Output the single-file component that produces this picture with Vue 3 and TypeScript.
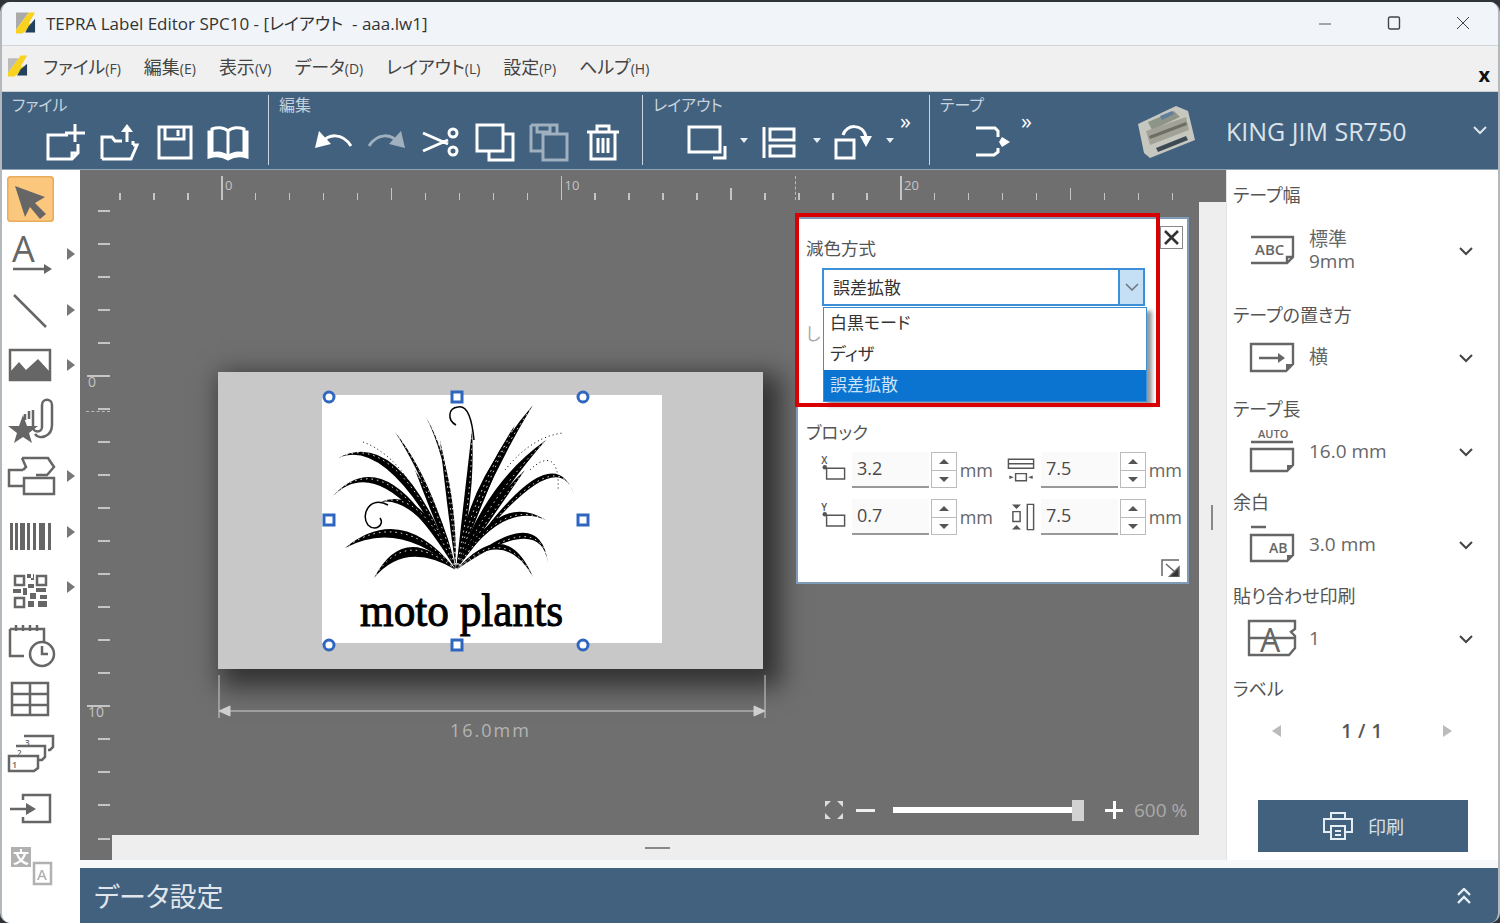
<script setup lang="ts">
import { h } from "vue";
import type { FunctionalComponent } from "vue";

interface IconDef {
  s?: string; // stroked outline
  f?: string; // solid parts
  t?: [number, number, number, string, string?][]; // x, y, size, text, colour
  dim?: boolean;
}

// renders a line icon, colour and weight come from the caller
const Ico: FunctionalComponent<{ def: IconDef; size: number; color: string; sw: number; vb?: number }> = (p) => {
  const vb = p.vb ?? p.size;
  const kids = [];
  if (p.def.f) kids.push(h("path", { d: p.def.f, fill: p.color, stroke: "none" }));
  if (p.def.s) kids.push(h("path", { d: p.def.s }));
  for (const [x, y, size, text, color] of p.def.t ?? []) {
    kids.push(h("text", { x, y, "font-size": size, fill: color ?? p.color, stroke: "none", "font-family": "Open Sans, Noto Sans CJK JP, sans-serif", "font-weight": size > 30 ? 400 : 600 }, text));
  }
  return h("svg", {
    width: p.size, height: p.size, viewBox: `0 0 ${vb} ${vb}`, fill: "none",
    stroke: p.color, "stroke-width": p.sw, opacity: p.def.dim ? 0.5 : 1, style: "flex-shrink:0;display:block;overflow:visible",
  }, kids);
};

const menus = [["ファイル", "(F)"], ["編集", "(E)"], ["表示", "(V)"], ["データ", "(D)"], ["レイアウト", "(L)"], ["設定", "(P)"], ["ヘルプ", "(H)"]];

const circle = (x: number, y: number, r: number) => `M${x - r} ${y}a${r} ${r} 0 1 1 ${r * 2} 0a${r} ${r} 0 1 1 ${-r * 2} 0`;

const fileIcons: IconDef[] = [
  { s: "M22 13H2V37H26L32 31V22M26 37V31H32M29 2V20M19 11H39" },
  { s: "M2 37V15H12L15 19H22M33 19V23M2 37H31L37 23H33M27 9V20", f: "M27 2L33 10H21Z" },
  { s: "M5 5H37V36H5ZM11 5V17H30V5M24 8V14" },
  { s: "M20 9C16 5 9 5 4 7V32C9 30 16 31 20 35C24 31 31 30 36 32V7C31 5 24 5 20 9ZM20 9V35M4 10H1V35C8 33 15 34 20 37C25 34 32 33 39 35V10H36" },
];
const editIcons: IconDef[] = [
  { s: "M9 21C15 12 29 10 38 24", f: "M2 26L6 9L18 22Z" },
  { s: "M31 21C25 12 11 10 2 24", f: "M38 26L34 9L22 22Z", dim: true },
  { s: `M2 11L27 22M2 29L27 18${circle(32, 11, 4)}${circle(32, 29, 4)}` },
  { s: "M2 3H28V29H2ZM28 12H38V38H14V29" },
  { s: "M2 3H28V12M2 3V29H14M8 3V10H21V3M14 12H38V38H14Z", dim: true },
  { s: "M4 10H36M14 10V4H26V10M8 10V37H32V10M15 16V31M20 16V31M25 16V31" },
];
const tapeIcon: IconDef = { s: "M3 6H22L25 9V15M25 26V30L21 33H3", f: "M29 15L37 20L29 25L26 20Z" };
const layoutIcons: IconDef[] = [
  { s: "M2 5H33V30H2ZM38 24V36H26" },
  { s: "M4 5V36M10 7H34V18H10ZM10 24H34V34H10Z" },
  { s: "M3 18H21V36H3ZM10 13C13 2 30 1 33 15", f: "M27 14H39L33 25Z" },
];

// tools on the left, in order from the top
const bars = [4, 9, 14, 21, 27, 33, 36, 42];
const tools: { icon: IconDef; more: boolean; active?: boolean }[] = [
  { icon: { f: "M8 10L38 21L28 27L39 38L33 43L23 31L18 41Z" }, more: false, active: true },
  { icon: { s: "M7 39H40", f: "M38 34L46 39L38 44Z", t: [[6, 32, 36, "A"]] }, more: true },
  { icon: { s: "M8 9L40 41" }, more: true },
  { icon: { s: "M4 9H44V39H4Z", f: "M4 39V31L13 21L20 29L32 18L44 31V39Z" }, more: true },
  { icon: { s: "M27 13V30C27 36 36 36 36 30V8C36 1 46 1 46 8V28C46 40 33 43 29 37M23 14V22M19 17V23", f: "M17 18L21 29L32 29L23 36L26 46L17 40L8 46L11 36L2 29L13 29Z" }, more: false },
  { icon: { s: "M16 6H42L48 15L41 23H30M16 6L20 15L17 18M17 18H3V34H18M18 26H48V42H18Z" }, more: true },
  { icon: { f: bars.map((x, i) => `M${x} 15h${i % 3 === 2 ? 5 : 3}v27h-${i % 3 === 2 ? 5 : 3}z`).join("") }, more: true },
  { icon: { s: "M9 13h9v9h-9zM31 13h9v9h-9zM9 35h9v9h-9z", f: "M21 11h4v6h3v-6h-1v4h-6zM22 21h6v4h-6zM7 26h8v4h-8zM17 25h4v7h-4zM30 25h10v4h-10zM24 30h6v6h-6zM34 32h7v4h-7zM22 38h6v6h-6zM32 38h9v6h-9z" }, more: true },
  { icon: { s: `M4 10H38V23M4 10V37H18M10 6V12M17 6V12M24 6V12M31 6V12${circle(36, 35, 12)}M36 27V35H42` }, more: false },
  { icon: { s: "M6 9H42V41H6ZM6 20H42M6 31H42M24 9V41" }, more: false },
  { icon: { s: "M18 6H47V17L44 20H42M10 16H39V27L36 30H33M3 26H32V38L28 41H3Z", t: [[19, 16, 8, "3"], [11, 26, 8, "2"], [6, 38, 9, "1"]] }, more: false },
  { icon: { s: "M17 15V10H44V37H17V32M4 24H22", f: "M20 18L30 24L20 30Z" }, more: false },
  { icon: { s: "M28 22H45V43H28Z", f: "M5 6H25V26H5Z", t: [[7, 22, 16, "文", "#fff"], [31, 39, 15, "A"]], dim: true }, more: false },
];

interface PropRow {
  label: string;
  icon: IconDef;
  lines: string[];
}
const propRows: PropRow[] = [
  { label: "テープ幅", icon: { s: "M3 11H45V31L39 37H3M45 31H39V37", t: [[7, 29, 15, "ABC"]] }, lines: ["標準", "9mm"] },
  { label: "テープの置き方", icon: { s: "M3 11H45V31L38 38H3ZM11 25H31", f: "M30 20L37 25L30 30ZM45 31L38 38V31Z" }, lines: ["横"] },
  { label: "テープ長", icon: { s: "M3 15H45M3 22H45V38L39 44H3Z", f: "M45 38L39 44V38Z", t: [[10, 11, 11, "AUTO"]] }, lines: ["16.0 mm"] },
  { label: "余白", icon: { s: "M3 7H18M3 15H45V35L39 41H3Z", f: "M45 35L39 41V35Z", t: [[21, 33, 14, "AB"]] }, lines: ["3.0 mm"] },
  { label: "貼り合わせ印刷", icon: { s: "M1 7H47V15L43 18L47 22V34L41 41H1ZM1 24H47", t: [[12, 38, 32, "A"]] }, lines: ["1"] },
];

// spin boxes in the floating block panel
const spinRows: { icon: IconDef; value: string }[] = [
  { icon: { s: "M14 18H34V30H14Z", f: `${circle(12, 17, 2.5)}`, t: [[8, 13, 11, "X"]] }, value: "3.2" },
  { icon: { s: "M6 8H34V18H6ZM6 13H34M14 24H26V32H14Z", f: "M7 26L12 28L7 30ZM33 26L28 28L33 30Z" }, value: "7.5" },
  { icon: { s: "M14 18H34V30H14Z", f: `${circle(12, 17, 2.5)}`, t: [[8, 13, 11, "Y"]] }, value: "0.7" },
  { icon: { s: "M27 6H34V34H27ZM11 14H19V25H11Z", f: "M10 6L15 11L20 6ZM10 34L15 29L20 34Z" }, value: "7.5" },
];

// ruler ticks, positions are relative to the canvas
const hTicks = Array.from({ length: 32 }, (_, i) => {
  const n = i - 3;
  const major = n % 10 === 0;
  const mid = !major && n % 5 === 0;
  return { x: 141 + n * 33.95, major, mid, label: major ? String(n) : "" };
});
const vTicks = Array.from({ length: 19 }, (_, i) => {
  const n = i - 5;
  const major = n % 10 === 0;
  const mid = !major && n % 5 === 0;
  return { y: 205 + n * 33, major, mid, label: major && n >= 0 ? String(n) : "" };
});

// the plant, drawn as filled blades in page coordinates
const base = [456, 570];
const blades: [number, number, number, number, number][] = [
  [533, 405, 478, 480, 8], [546, 440, 490, 490, 9], [515, 425, 480, 490, 7],
  [505, 445, 470, 500, 6], [525, 470, 490, 510, 6],
  [575, 497, 555, 430, 5], [548, 563, 540, 505, 6], [533, 577, 505, 520, 6],
  [546, 520, 500, 495, 6], [338, 458, 395, 430, 8], [332, 497, 385, 440, 7],
  [380, 502, 420, 490, 7], [345, 548, 400, 510, 9], [374, 578, 405, 530, 10],
  [395, 432, 430, 480, 3], [426, 417, 455, 470, 2], [472, 430, 470, 500, 6],
  [440, 440, 450, 500, 4], [415, 470, 440, 520, 6],
];
const bladePaths = blades.map(([tx, ty, cx, cy, w]) => {
  const [bx, by] = base;
  const len = Math.hypot(tx - bx, ty - by);
  const nx = (-(ty - by) / len) * w;
  const ny = ((tx - bx) / len) * w;
  return {
    fill: `M${bx} ${by}Q${cx + nx} ${cy + ny} ${tx} ${ty}Q${cx - nx} ${cy - ny} ${bx} ${by}Z`,
    hatch: `M${bx} ${by}Q${cx + nx / 3} ${cy + ny / 3} ${tx} ${ty}`,
  };
});

const handles = [[329, 397, 0], [457, 397, 1], [583, 397, 0], [329, 520, 1], [583, 520, 1], [329, 645, 0], [457, 645, 1], [583, 645, 0]];
</script>

<template>
  <div class="window">
    <header class="titlebar">
      <svg class="logo" width="20" height="23" viewBox="0 0 22 24">
        <path d="M0 1H14L0 20Z" fill="#aaa" />
        <path d="M14 1H21L14 13H21L7 24H0V20Z" fill="#f7d21e" />
        <path d="M21 8V23H10L14 16Z" fill="#23405f" />
      </svg>
      <span class="app-title">TEPRA Label Editor SPC10 - [レイアウト&nbsp; - aaa.lw1]</span>
      <div class="win-btns">
        <svg width="14" height="14" viewBox="0 0 14 14" stroke="#555" fill="none"><path d="M1 8H13" /></svg>
        <svg width="14" height="14" viewBox="0 0 14 14" stroke="#444" fill="none" stroke-width="1.4"><rect x="1.5" y="1" width="11" height="12" rx="1.5" /></svg>
        <svg width="14" height="14" viewBox="0 0 14 14" stroke="#444" fill="none"><path d="M1 1L13 13M13 1L1 13" /></svg>
      </div>
    </header>

    <nav class="menubar">
      <svg class="menu-logo" width="20" height="23" viewBox="0 0 22 24">
        <path d="M0 4H12L0 20Z" fill="#bbb" />
        <path d="M14 1H21L14 13H21L7 24H0V20Z" fill="#f7d21e" />
        <path d="M21 10V23H10L14 16Z" fill="#23405f" />
      </svg>
      <span v-for="m in menus" :key="m[0]" class="menu-item">{{ m[0] }}<small>{{ m[1] }}</small></span>
      <span class="menu-close">x</span>
    </nav>

    <div class="toolbar">
      <section class="tb-group tb-file">
        <div class="tb-label">ファイル</div>
        <div class="tb-icons gap14">
          <Ico v-for="(ic, i) in fileIcons" :key="i" :def="ic" :size="40" color="#fff" :sw="3" />
        </div>
      </section>
      <section class="tb-group tb-edit">
        <div class="tb-label">編集</div>
        <div class="tb-icons gap14">
          <Ico v-for="(ic, i) in editIcons" :key="i" :def="ic" :size="40" color="#fff" :sw="3" />
        </div>
      </section>
      <section class="tb-group tb-layout">
        <div class="tb-label">レイアウト</div>
        <div class="tb-icons">
          <template v-for="(ic, i) in layoutIcons" :key="i">
            <Ico :def="ic" :size="40" color="#fff" :sw="3" />
            <span class="drop"></span>
          </template>
          <span class="more">»</span>
        </div>
      </section>
      <section class="tb-group tb-tape">
        <div class="tb-label">テープ</div>
        <div class="tb-icons">
          <Ico :def="tapeIcon" :size="40" color="#fff" :sw="3" />
          <span class="more more-tape">»</span>
        </div>
      </section>
      <svg class="printer" width="60" height="56" viewBox="0 0 60 56">
        <path d="M2 21L40 3L52 8L59 37L14 55L8 50Z" fill="#c6c8c0" />
        <path d="M12 19L38 8L44 14L16 27Z" fill="#8f9488" />
        <path d="M24 13L36 8L38 11L26 17Z" fill="#5f7f9c" />
        <path d="M10 28L50 14L53 27L14 42Z" fill="#a2a396" />
        <path d="M13 33L50 19L51 22L14 36Z" fill="#6d6e64" />
        <path d="M20 45L50 33L52 37L22 49Z" fill="#3d4a54" />
      </svg>
      <span class="printer-name">KING JIM SR750</span>
      <svg class="printer-chev" width="14" height="9" viewBox="0 0 14 9" fill="none" stroke="#dde5ec" stroke-width="2"><path d="M1 1L7 7L13 1" /></svg>
    </div>

    <div class="body">
      <aside class="tools">
        <div v-for="(tool, i) in tools" :key="i" class="tool">
          <span class="tool-box" :class="{ active: tool.active }">
            <Ico :def="tool.icon" :size="48" color="#666" :sw="2.5" />
          </span>
          <span v-if="tool.more" class="tool-more"></span>
        </div>
      </aside>

      <div class="main">
        <div class="work">
          <div class="center">
            <div class="editor">
              <div class="canvas">
                <template v-for="t in hTicks" :key="t.x">
                  <div class="htick" :class="{ major: t.major, mid: t.mid }" :style="{ left: t.x + 'px' }"></div>
                  <span v-if="t.label" class="hlabel" :style="{ left: t.x + 4 + 'px' }">{{ t.label }}</span>
                </template>
                <div class="hmark"></div>
                <template v-for="t in vTicks" :key="t.y">
                  <div class="vtick" :class="{ major: t.major, mid: t.mid }" :style="{ top: t.y + 'px' }"></div>
                  <span v-if="t.label" class="vlabel" :style="{ top: t.y + 'px' }">{{ t.label }}</span>
                </template>
                <div class="vmark"></div>

                <div class="sheet">
                  <div class="sheet-image"></div>
                  <svg class="art" width="545" height="297" viewBox="218 372 545 297">
                    <g v-for="(b, i) in bladePaths" :key="i">
                      <path :d="b.fill" fill="#000" />
                      <path :d="b.hatch" fill="none" stroke="#fff" stroke-width="1" stroke-dasharray="1.5 4" />
                    </g>
                    <path d="M474 440C472 420 468 405 458 407C448 408 447 420 456 425" fill="none" stroke="#000" stroke-width="1.5" />
                    <path d="M388 505C370 495 360 515 368 525C375 532 385 525 380 518" fill="none" stroke="#000" stroke-width="1.5" />
                    <path d="M530 470C545 455 560 455 558 490M505 470C525 445 545 435 563 433M363 442C385 450 405 470 420 500" fill="none" stroke="#000" stroke-width="1" stroke-dasharray="1 3" />
                    <text x="360" y="626" textLength="203" lengthAdjust="spacingAndGlyphs" class="art-text">moto plants</text>
                    <template v-for="(p, i) in handles" :key="i">
                      <rect v-if="p[2]" :x="p[0] - 5" :y="p[1] - 5" width="10" height="10" fill="#fff" stroke="#2f67c0" stroke-width="3" />
                      <circle v-else :cx="p[0]" :cy="p[1]" r="5" fill="#fff" stroke="#2f67c0" stroke-width="3" />
                    </template>
                  </svg>
                </div>

                <svg class="dimension" width="552" height="48" viewBox="0 0 552 48" fill="none" stroke="#cfcfcf">
                  <path d="M1 0V43M547 0V43M3 36H545" />
                  <path d="M1 36L12 31V41ZM547 36L536 31V41Z" fill="#cfcfcf" />
                </svg>
                <span class="dim-text">16.0mm</span>

                <div class="zoom-bar">
                  <svg width="20" height="20" viewBox="0 0 20 20" fill="#ddd"><path d="M1 1H7L1 7ZM19 1H13L19 7ZM1 19H7L1 13ZM19 19H13L19 13Z" /></svg>
                  <span class="zoom-minus"></span>
                  <span class="zoom-track"><span class="zoom-thumb"></span></span>
                  <span class="zoom-plus"></span>
                  <span class="zoom-value">600 %</span>
                </div>

                <div class="panel">
                  <button type="button" class="panel-close">
                    <svg width="15" height="15" viewBox="0 0 15 15" stroke="#333" stroke-width="2.6" fill="none"><path d="M1 1L14 14M14 1L1 14" /></svg>
                  </button>
                  <div class="panel-title">減色方式</div>
                  <div class="select">
                    <span class="select-value">誤差拡散</span>
                    <span class="select-btn">
                      <svg width="14" height="8" viewBox="0 0 14 8" fill="none" stroke="#6b7580" stroke-width="1.5"><path d="M1 1L7 7L13 1" /></svg>
                    </span>
                    <ul class="select-list">
                      <li>白黒モード</li>
                      <li>ディザ</li>
                      <li class="selected">誤差拡散</li>
                    </ul>
                  </div>
                  <span class="behind">し</span>
                  <div class="panel-title block-title">ブロック</div>
                  <div class="spin-grid">
                    <div v-for="(row, i) in spinRows" :key="i" class="spin-item">
                      <Ico :def="row.icon" :size="36" :vb="40" color="#555" :sw="1.6" />
                      <span class="spin-input">{{ row.value }}</span>
                      <span class="spin-btns"><i class="up"></i><i class="down"></i></span>
                      <span class="spin-unit">mm</span>
                    </div>
                  </div>
                  <svg class="panel-grip" width="19" height="18" viewBox="0 0 19 18" fill="none" stroke="#666" stroke-width="1.5">
                    <path d="M1 17V1H18" />
                    <path d="M5 5L14 13M18 18V8L8 18Z" fill="#333" />
                  </svg>
                </div>
                <div class="callout"></div>
              </div>
              <div class="vscroll"><span class="grip-v"></span></div>
            </div>
            <div class="hscroll"><span class="grip-h"></span></div>
          </div>

          <aside class="props">
            <div v-for="(row, i) in propRows" :key="row.label" class="prop-group" :class="{ first: i === 0 }">
              <div class="prop-label">{{ row.label }}</div>
              <div class="prop-row">
                <Ico :def="row.icon" :size="48" color="#666" :sw="2.4" />
                <div class="prop-text">
                  <div v-for="l in row.lines" :key="l">{{ l }}</div>
                </div>
                <svg class="chev" width="14" height="9" viewBox="0 0 14 9" fill="none" stroke="#444" stroke-width="2"><path d="M1 1L7 7L13 1" /></svg>
              </div>
            </div>
            <div class="prop-label">ラベル</div>
            <div class="pager">
              <span class="tri-left"></span>
              <span>1 / 1</span>
              <span class="tri-right"></span>
            </div>
            <button type="button" class="print-btn">
              <svg width="32" height="30" viewBox="0 0 32 30" fill="none" stroke="#e6edf3" stroke-width="2"><path d="M9 8V2H23V8M9 21H2V8H30V21H23M9 15H23V28H9ZM13 20H19M13 24H19" /></svg>
              <span>印刷</span>
            </button>
          </aside>
        </div>
        <div class="strip"></div>
        <div class="databar">
          <span class="databar-title">データ設定</span>
          <svg width="14" height="16" viewBox="0 0 14 16" fill="none" stroke="#e6edf3" stroke-width="2.4"><path d="M1 7L7 1L13 7M1 15L7 9L13 15" /></svg>
        </div>
      </div>
    </div>
  </div>
</template>

<style>
html,
body {
  margin: 0;
  background: #2f3439;
  overflow: hidden;
}
</style>

<style scoped>
.window {
  box-sizing: border-box;
  width: 1500px;
  height: 921px;
  margin-top: 2px;
  display: flex;
  flex-direction: column;
  overflow: hidden;
  border-radius: 10px;
  border-left: 2px solid #b3b8bd;
  border-right: 2px solid #b3b8bd;
  background: #f0f0f0;
  color: #4a4a4a;
  font-family: "Open Sans", "Noto Sans CJK JP", sans-serif;
  font-feature-settings: "palt";
}

.titlebar {
  height: 44px;
  flex-shrink: 0;
  display: flex;
  align-items: center;
  padding-bottom: 2px;
  background: #f1f5fa;
  border-bottom: 1px solid #d3d6d9;
  box-sizing: border-box;
}

.logo {
  margin-left: 14px;
}

.app-title {
  margin-left: 10px;
  font-size: 17px;
  color: #333;
}

.win-btns {
  margin-left: auto;
  margin-right: 28px;
  display: flex;
  gap: 55px;
}

.menubar {
  position: relative;
  height: 46px;
  flex-shrink: 0;
  display: flex;
  align-items: center;
  gap: 23px;
  box-sizing: border-box;
  padding-bottom: 6px;
  background: #f0f0f0;
  border-bottom: 1px solid #c8ced4;
}

.menu-logo {
  margin-left: 6px;
  margin-right: -8px;
}

.menu-item {
  font-size: 18px;
  color: #444;
}

.menu-item small {
  font-size: 14px;
}

.menu-close {
  position: absolute;
  right: 8px;
  top: 15px;
  font-size: 20px;
  font-weight: 700;
  color: #111;
}

.toolbar {
  height: 78px;
  flex-shrink: 0;
  display: flex;
  align-items: center;
  box-sizing: border-box;
  background: #41617f;
  border-bottom: 1px solid #8fa3b5;
}

.tb-group {
  align-self: stretch;
  box-sizing: border-box;
  margin: 3px 0 4px;
  border-right: 1px solid #c9d4de;
}

.tb-label {
  height: 22px;
  line-height: 21px;
  font-size: 16px;
  padding-left: 10px;
  color: #c6d2dd;
}

.tb-icons {
  display: flex;
  align-items: flex-start;
  margin-top: 5px;
}

.gap14 {
  gap: 14px;
}

.tb-file {
  width: 267px;
}

.tb-file .tb-icons {
  padding-left: 44px;
}

.tb-edit {
  width: 374px;
}

.tb-edit .tb-icons {
  padding-left: 44px;
}

.tb-layout {
  width: 287px;
}

.tb-layout .tb-icons {
  padding-left: 44px;
}

.tb-tape {
  width: 206px;
  border-right: none;
}

.tb-tape .tb-icons {
  padding-left: 43px;
}

.drop {
  width: 33px;
  height: 34px;
  flex-shrink: 0;
  position: relative;
}

.drop::after {
  content: "";
  position: absolute;
  left: 13px;
  top: 16px;
  border-left: 4px solid transparent;
  border-right: 4px solid transparent;
  border-top: 5px solid #e6edf3;
}

.more {
  margin-left: -6px;
  margin-top: -14px;
  font-size: 22px;
  line-height: 24px;
  color: #fff;
}

.more-tape {
  margin-left: 8px;
}

.printer {
  flex-shrink: 0;
  filter: blur(0.6px);
}

.printer-name {
  margin-left: 30px;
  font-size: 25px;
  color: #dbe3ea;
}

.printer-chev {
  margin-left: auto;
  margin-right: 11px;
}

.body {
  flex: 1;
  min-height: 0;
  display: flex;
}

.tools {
  width: 78px;
  flex-shrink: 0;
  padding-top: 1px;
  background: #fff;
}

.tool {
  height: 55.5px;
  display: flex;
  align-items: center;
  padding-left: 4px;
}

.tool-box {
  width: 48px;
  height: 48px;
  display: block;
  box-sizing: border-box;
  border-radius: 4px;
}

.tool-box.active {
  width: 47px;
  height: 46px;
  margin-left: 1px;
  background: #fbc77d;
  box-shadow: inset 0 0 0 1.5px #e9ab5c;
}

.tool-more {
  margin-left: 13px;
  border-top: 6px solid transparent;
  border-bottom: 6px solid transparent;
  border-left: 8px solid #777;
}

.main {
  flex: 1;
  min-width: 0;
  display: flex;
  flex-direction: column;
}

.work {
  height: 690px;
  flex-shrink: 0;
  display: flex;
}

.center {
  width: 1146px;
  flex-shrink: 0;
  display: flex;
  flex-direction: column;
  background: #eee;
}

.editor {
  height: 665px;
  flex-shrink: 0;
  display: flex;
}

.canvas {
  position: relative;
  width: 1119px;
  flex-shrink: 0;
  overflow: hidden;
  background: #6f6f6f;
}

.htick {
  position: absolute;
  top: 23px;
  width: 1.5px;
  height: 7px;
  background: #c4c4c4;
}

.htick.mid {
  top: 18px;
  height: 12px;
}

.htick.major {
  top: 6px;
  height: 24px;
}

.hlabel {
  position: absolute;
  top: 6px;
  font-size: 13px;
  line-height: 18px;
  color: #c4c4c4;
}

.hmark {
  position: absolute;
  left: 715px;
  top: 6px;
  height: 24px;
  border-left: 1px dashed #bbb;
}

.vtick {
  position: absolute;
  left: 18px;
  width: 12px;
  height: 1.5px;
  background: #c4c4c4;
}

.vtick.major {
  left: 7px;
  width: 23px;
}

.vlabel {
  position: absolute;
  left: 8px;
  font-size: 14px;
  line-height: 13px;
  color: #c4c4c4;
}

.vmark {
  position: absolute;
  left: 6px;
  top: 241px;
  width: 24px;
  border-top: 1px dashed #bbb;
}

.sheet {
  position: absolute;
  left: 138px;
  top: 202px;
  width: 545px;
  height: 297px;
  background: #c8c8c8;
  box-shadow: 10px 10px 24px 8px rgba(0, 0, 0, 0.55);
}

.sheet-image {
  position: absolute;
  left: 104px;
  top: 23px;
  width: 340px;
  height: 248px;
  background: #fff;
}

.art {
  position: absolute;
  left: 0;
  top: 0;
  overflow: visible;
}

.art-text {
  font-family: "Liberation Serif", serif;
  font-size: 46px;
  fill: #000;
  stroke: #000;
  stroke-width: 1;
}

.dimension {
  position: absolute;
  left: 138px;
  top: 505px;
}

.dim-text {
  position: absolute;
  left: 370px;
  top: 548px;
  font-size: 18px;
  letter-spacing: 2px;
  color: #b4b4b4;
}

.zoom-bar {
  position: absolute;
  left: 744px;
  top: 627px;
  display: flex;
  align-items: center;
}

.zoom-minus {
  width: 19px;
  height: 3px;
  margin-left: 12px;
  background: #eee;
}

.zoom-track {
  position: relative;
  width: 186px;
  height: 6px;
  margin-left: 18px;
  background: #fff;
}

.zoom-thumb {
  position: absolute;
  right: -5px;
  top: -7px;
  width: 12px;
  height: 21px;
  background: #d2d2d2;
}

.zoom-plus {
  position: relative;
  width: 18px;
  height: 3px;
  margin-left: 26px;
  background: #fff;
}

.zoom-plus::after {
  content: "";
  position: absolute;
  left: 8px;
  top: -8px;
  width: 3px;
  height: 18px;
  background: #fff;
}

.zoom-value {
  margin-left: 11px;
  font-size: 19px;
  color: #aaa;
}

.panel {
  position: absolute;
  left: 716px;
  top: 47px;
  width: 393px;
  height: 367px;
  box-sizing: border-box;
  display: flex;
  flex-direction: column;
  padding: 18px 8px 5px;
  background: #fff;
  border: 2px solid #7f9bb8;
}

.panel-close {
  position: absolute;
  top: 7px;
  right: 4px;
  width: 23px;
  height: 23px;
  padding: 0;
  display: flex;
  align-items: center;
  justify-content: center;
  background: #fff;
  border: 1px solid #888;
}

.panel-title {
  height: 22px;
  line-height: 22px;
  font-size: 17.5px;
  color: #555;
}

.select {
  position: relative;
  width: 323px;
  height: 38px;
  box-sizing: border-box;
  margin: 9px 0 0 16px;
  display: flex;
  align-items: center;
  border: 2px solid #3d8fd8;
}

.select-value {
  flex: 1;
  padding: 0 0 2px 9px;
  font-size: 17px;
  color: #333;
}

.select-btn {
  width: 23px;
  align-self: stretch;
  display: flex;
  align-items: center;
  justify-content: center;
  background: #c5dff5;
  border-left: 2px solid #3d8fd8;
}

.select-list {
  position: absolute;
  left: -1px;
  top: 37px;
  z-index: 2;
  width: 324px;
  margin: 0;
  padding: 0;
  list-style: none;
  box-sizing: border-box;
  background: #fff;
  border: 1px solid #3d8fd8;
  box-shadow: 5px 4px 4px rgba(0, 0, 0, 0.4);
}

.select-list li {
  height: 31px;
  line-height: 29px;
  padding-left: 6px;
  font-size: 17px;
  color: #333;
}

.select-list .selected {
  background: #0a74d0;
  color: #cfe4f8;
}

.behind {
  position: absolute;
  left: 8px;
  top: 101px;
  font-size: 17px;
  color: #aaa;
}

.block-title {
  margin-top: 115px;
}

.spin-grid {
  margin: 9px 0 0 8px;
  display: grid;
  grid-template-columns: 179px 179px;
  column-gap: 10px;
  row-gap: 11px;
}

.spin-item {
  display: flex;
  align-items: center;
  height: 36px;
}

.spin-input {
  width: 78px;
  height: 36px;
  margin-left: 2px;
  padding-left: 5px;
  box-sizing: border-box;
  line-height: 32px;
  font-size: 18px;
  background: #fafafa;
  border-bottom: 2px solid #999;
}

.spin-btns {
  width: 26px;
  height: 36px;
  margin-left: 2px;
  box-sizing: border-box;
  display: flex;
  flex-direction: column;
  border: 1px solid #bbb;
}

.spin-btns i {
  flex: 1;
  position: relative;
}

.spin-btns i + i {
  border-top: 1px solid #bbb;
}

.spin-btns i::after {
  content: "";
  position: absolute;
  left: 7px;
  top: 6px;
  border-left: 5px solid transparent;
  border-right: 5px solid transparent;
}

.spin-btns .up::after {
  border-bottom: 5px solid #555;
}

.spin-btns .down::after {
  border-top: 5px solid #555;
}

.spin-unit {
  margin-left: 3px;
  font-size: 18px;
  color: #666;
}

.panel-grip {
  margin-top: auto;
  align-self: flex-end;
  margin-right: -1px;
}

.callout {
  position: absolute;
  left: 715px;
  top: 43px;
  width: 365px;
  height: 194px;
  box-sizing: border-box;
  border: 4px solid #d80000;
  z-index: 3;
}

.vscroll {
  position: relative;
  flex: 1;
  background: linear-gradient(#6f6f6f 32px, #eee 32px);
}

.grip-v {
  position: absolute;
  left: 12px;
  top: 335px;
  width: 2px;
  height: 25px;
  background: #888;
}

.hscroll {
  position: relative;
  flex: 1;
  background: linear-gradient(90deg, #6f6f6f 32px, #eee 32px);
}

.hscroll::before {
  content: "";
  position: absolute;
  left: 18px;
  top: 3px;
  width: 12px;
  height: 1.5px;
  background: #c4c4c4;
}

.grip-h {
  position: absolute;
  left: 565px;
  top: 12px;
  width: 25px;
  height: 2px;
  background: #888;
}

.props {
  flex: 1;
  min-width: 0;
  display: flex;
  flex-direction: column;
  box-sizing: border-box;
  padding: 12px 0 8px 6px;
  background: #fff;
  border-left: 1px solid #e3e3e3;
}

.prop-group {
  flex-shrink: 0;
}

.prop-label {
  height: 26px;
  line-height: 26px;
  font-size: 18px;
  color: #555;
}

.prop-row {
  height: 58px;
  margin-bottom: 9.5px;
  display: flex;
  align-items: center;
  padding-left: 15px;
}

.first .prop-row {
  height: 84px;
  margin-bottom: 10px;
}

.prop-text {
  margin-left: 13px;
  font-size: 19px;
  line-height: 22px;
  color: #666;
}

.chev {
  margin-left: auto;
  margin-right: 25px;
  margin-top: 3px;
}

.pager {
  width: 180px;
  margin: 16px 0 0 39px;
  display: flex;
  align-items: center;
  justify-content: space-between;
  font-size: 19px;
  font-weight: 600;
  letter-spacing: 0.5px;
  color: #555;
}

.tri-left {
  border-top: 6px solid transparent;
  border-bottom: 6px solid transparent;
  border-right: 9px solid #bbb;
}

.tri-right {
  border-top: 6px solid transparent;
  border-bottom: 6px solid transparent;
  border-left: 9px solid #bbb;
}

.print-btn {
  width: 210px;
  height: 52px;
  margin: auto 0 0 25px;
  display: flex;
  align-items: center;
  justify-content: center;
  gap: 14px;
  font-family: inherit;
  font-size: 18px;
  color: #d7e0e8;
  background: #41617f;
  border: none;
}

.strip {
  height: 8px;
  flex-shrink: 0;
  background: #f7f8f9;
}

.databar {
  flex: 1;
  display: flex;
  align-items: center;
  justify-content: space-between;
  padding: 0 27px 0 14px;
  background: #41617f;
}

.databar-title {
  font-size: 27px;
  color: #e0e6ec;
}
</style>
